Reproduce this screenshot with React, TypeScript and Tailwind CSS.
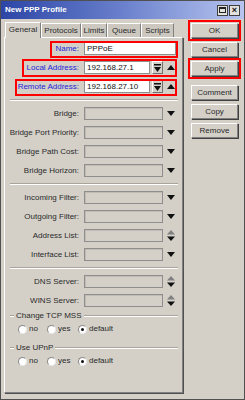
import React from "react";

const font = "font-['Liberation_Sans',Arial,sans-serif]";

function DownArrow() {
  return (
    <svg width="8" height="5" viewBox="0 0 8 5" className="shrink-0">
      <path d="M0 0 L8 0 L4 5 Z" fill="#111" />
    </svg>
  );
}

function UpArrow() {
  return (
    <svg width="8" height="5" viewBox="0 0 8 5" className="shrink-0">
      <path d="M0 5 L8 5 L4 0 Z" fill="#111" />
    </svg>
  );
}

function UpDown() {
  return (
    <svg width="8" height="11" viewBox="0 0 8 11" className="shrink-0">
      <path d="M0 4.5 L8 4.5 L4 0 Z" fill="#808080" />
      <path d="M0 6.5 L8 6.5 L4 11 Z" fill="#111" />
    </svg>
  );
}

function SpinButton() {
  return (
    <div className="w-[11px] h-[13px] bg-[#d4d0c8] border border-t-white border-l-white border-r-[#707070] border-b-[#707070] flex items-center justify-center">
      <svg width="7" height="8" viewBox="0 0 7 8">
        <rect x="0" y="0" width="7" height="1.5" fill="#111" />
        <path d="M0 3 L7 3 L3.5 8 Z" fill="#111" />
      </svg>
    </div>
  );
}

function Field({ value, width = "w-[79px]", filled = false }: { value?: string; width?: string; filled?: boolean }) {
  return (
    <div
      className={`${width} h-[13px] border border-[#8e8e8e] ${
        filled ? "bg-white" : "bg-[#d4d0c8] shadow-[inset_1px_1px_0_#c0bcb4]"
      } flex items-center pl-[2px] text-[#111] leading-none`}
    >
      {value}
    </div>
  );
}

function Row({
  label,
  blue = false,
  children,
  box,
}: {
  label: string;
  blue?: boolean;
  children: React.ReactNode;
  box?: string;
}) {
  return (
    <div className="relative h-[19px] flex items-center">
      <div className={`w-[75px] text-right pr-[1px] ${blue ? "text-[#2424d8]" : "text-[#2a2a2a]"}`}>{label}</div>
      <div className="ml-[4px] flex items-center">{children}</div>
      {box && <div className={`absolute border-2 border-[#ff0000] ${box}`} />}
    </div>
  );
}

function Sep() {
  return (
    <div className="h-[8px] flex items-center pl-[5px] pr-[4px]">
      <div className="w-full border-t border-t-[#a8a49c] border-b border-b-white" />
    </div>
  );
}

function Radio({ label, checked = false }: { label: string; checked?: boolean }) {
  return (
    <div className="flex items-center gap-[2px]">
      <div className="w-[9px] h-[9px] rounded-full bg-white border border-[#8a8a8a] border-r-[#e8e8e8] border-b-[#e8e8e8] flex items-center justify-center">
        {checked && <div className="w-[3px] h-[3px] rounded-full bg-[#111]" />}
      </div>
      <span className="text-[#2a2a2a]">{label}</span>
    </div>
  );
}

function Group({ title }: { title: string }) {
  return (
    <div>
      <div className="h-[12px] flex items-center pl-[5px] pr-[4px] gap-[2px]">
        <div className="w-[4px] border-t border-t-[#a8a49c] border-b border-b-white" />
        <span className="text-[#2a2a2a]">{title}</span>
        <div className="flex-1 border-t border-t-[#a8a49c] border-b border-b-white" />
      </div>
      <div className="h-[14px] flex items-center pl-[13px]">
        <div className="w-[29px]">
          <Radio label="no" />
        </div>
        <div className="w-[31px]">
          <Radio label="yes" />
        </div>
        <Radio label="default" checked />
      </div>
    </div>
  );
}

function Btn({ label, red = false, className = "" }: { label: string; red?: boolean; className?: string }) {
  return (
    <div
      className={`h-[15px] w-[47px] bg-[#d4d0c8] border border-t-white border-l-white border-r-[#808080] border-b-[#808080] shadow-[1px_1px_0_#404040] flex items-center justify-center text-[#2a2a2a] ${
        red ? "outline-2 outline-[#ff0000] outline-offset-[1px]" : ""
      } ${className}`}
    >
      {label}
    </div>
  );
}

export default function App() {
  const tabs = [
    { name: "Protocols", w: "w-[40px]" },
    { name: "Limits", w: "w-[26px]" },
    { name: "Queue", w: "w-[34px]" },
    { name: "Scripts", w: "w-[33px]" },
  ];
  return (
    <div className={`${font} text-[8px] leading-none w-[245px] h-[400px] bg-[#d4d0c8] border border-[#505050] flex flex-col overflow-hidden`}>
      {/* title bar */}
      <div className="h-[18px] shrink-0 bg-gradient-to-r from-[#2e45a6] via-[#6a80cc] to-[#b9c5ef] flex items-center pl-[4px] pr-[4px]">
        <span className="text-white text-[8px] font-bold">New PPP Profile</span>
        <div className="ml-auto flex gap-[1px]">
          <div className="w-[11px] h-[11px] bg-[#e4e2dc] border border-[#404040] flex items-center justify-center">
            <div className="w-[7px] h-[6px] border border-[#222] border-t-2" />
          </div>
          <div className="w-[11px] h-[11px] bg-[#e4e2dc] border border-[#404040] flex items-center justify-center text-[#111] font-bold text-[9px]">
            ×
          </div>
        </div>
      </div>

      {/* body */}
      <div className="flex pl-[3px]">
        <div className="w-[179px] mt-[2px] flex flex-col">
          {/* tabs */}
          <div className="flex items-end h-[16px] pl-[1px]">
            <div className="w-[36px] h-[16px] bg-[#d4d0c8] border-t border-l border-t-white border-l-white border-r border-r-[#808080] flex items-center justify-center text-[#2a2a2a] relative z-10 -mb-[1px] pb-[1px]">
              General
            </div>
            {tabs.map((t) => (
              <div
                key={t.name}
                className={`${t.w} h-[14px] bg-[#ccc8c0] border-t border-l border-t-white border-l-white border-r border-r-[#808080] flex items-center justify-center text-[#2a2a2a]`}
              >
                {t.name}
              </div>
            ))}
          </div>
          {/* panel */}
          <div className="h-[356px] border border-t-white border-l-white border-r-[#808080] border-b-[#808080] shadow-[1px_1px_0_#505050] pt-[1px]">
            <Row label="Name:" blue box="left-[45px] w-[128px] top-[2px] h-[17px]">
              <Field value="PPPoE" filled width="w-[92px]" />
            </Row>
            <Row label="Local Address:" blue box="left-[17px] w-[155px] top-[1px] h-[18px]">
              <Field value="192.168.27.1" filled width="w-[66px]" />
              <div className="ml-[2px]">
                <SpinButton />
              </div>
              <div className="ml-[4px]">
                <UpArrow />
              </div>
            </Row>
            <Row label="Remote Address:" blue box="left-[10px] w-[162px] top-[2px] h-[17px]">
              <Field value="192.168.27.10" filled width="w-[66px]" />
              <div className="ml-[2px]">
                <SpinButton />
              </div>
              <div className="ml-[4px]">
                <UpArrow />
              </div>
            </Row>
            <Sep />
            {["Bridge:", "Bridge Port Priority:", "Bridge Path Cost:", "Bridge Horizon:"].map((l) => (
              <Row key={l} label={l}>
                <Field />
                <div className="ml-[4px]">
                  <DownArrow />
                </div>
              </Row>
            ))}
            <Sep />
            <Row label="Incoming Filter:">
              <Field />
              <div className="ml-[4px]">
                <DownArrow />
              </div>
            </Row>
            <Row label="Outgoing Filter:">
              <Field />
              <div className="ml-[4px]">
                <DownArrow />
              </div>
            </Row>
            <Row label="Address List:">
              <Field />
              <div className="ml-[4px]">
                <UpDown />
              </div>
            </Row>
            <Row label="Interface List:">
              <Field />
              <div className="ml-[4px]">
                <DownArrow />
              </div>
            </Row>
            <Sep />
            <Row label="DNS Server:">
              <Field />
              <div className="ml-[4px]">
                <UpDown />
              </div>
            </Row>
            <Row label="WINS Server:">
              <Field />
              <div className="ml-[4px]">
                <UpDown />
              </div>
            </Row>
            <Group title="Change TCP MSS" />
            <div className="h-[6px]" />
            <Group title="Use UPnP" />
          </div>
        </div>

        {/* buttons */}
        <div className="ml-[8px] mt-[4px] flex flex-col gap-[4px]">
          <Btn label="OK" red />
          <Btn label="Cancel" />
          <Btn label="Apply" red />
          <Btn label="Comment" className="mt-[5px]" />
          <Btn label="Copy" />
          <Btn label="Remove" />
        </div>
      </div>
    </div>
  );
}
